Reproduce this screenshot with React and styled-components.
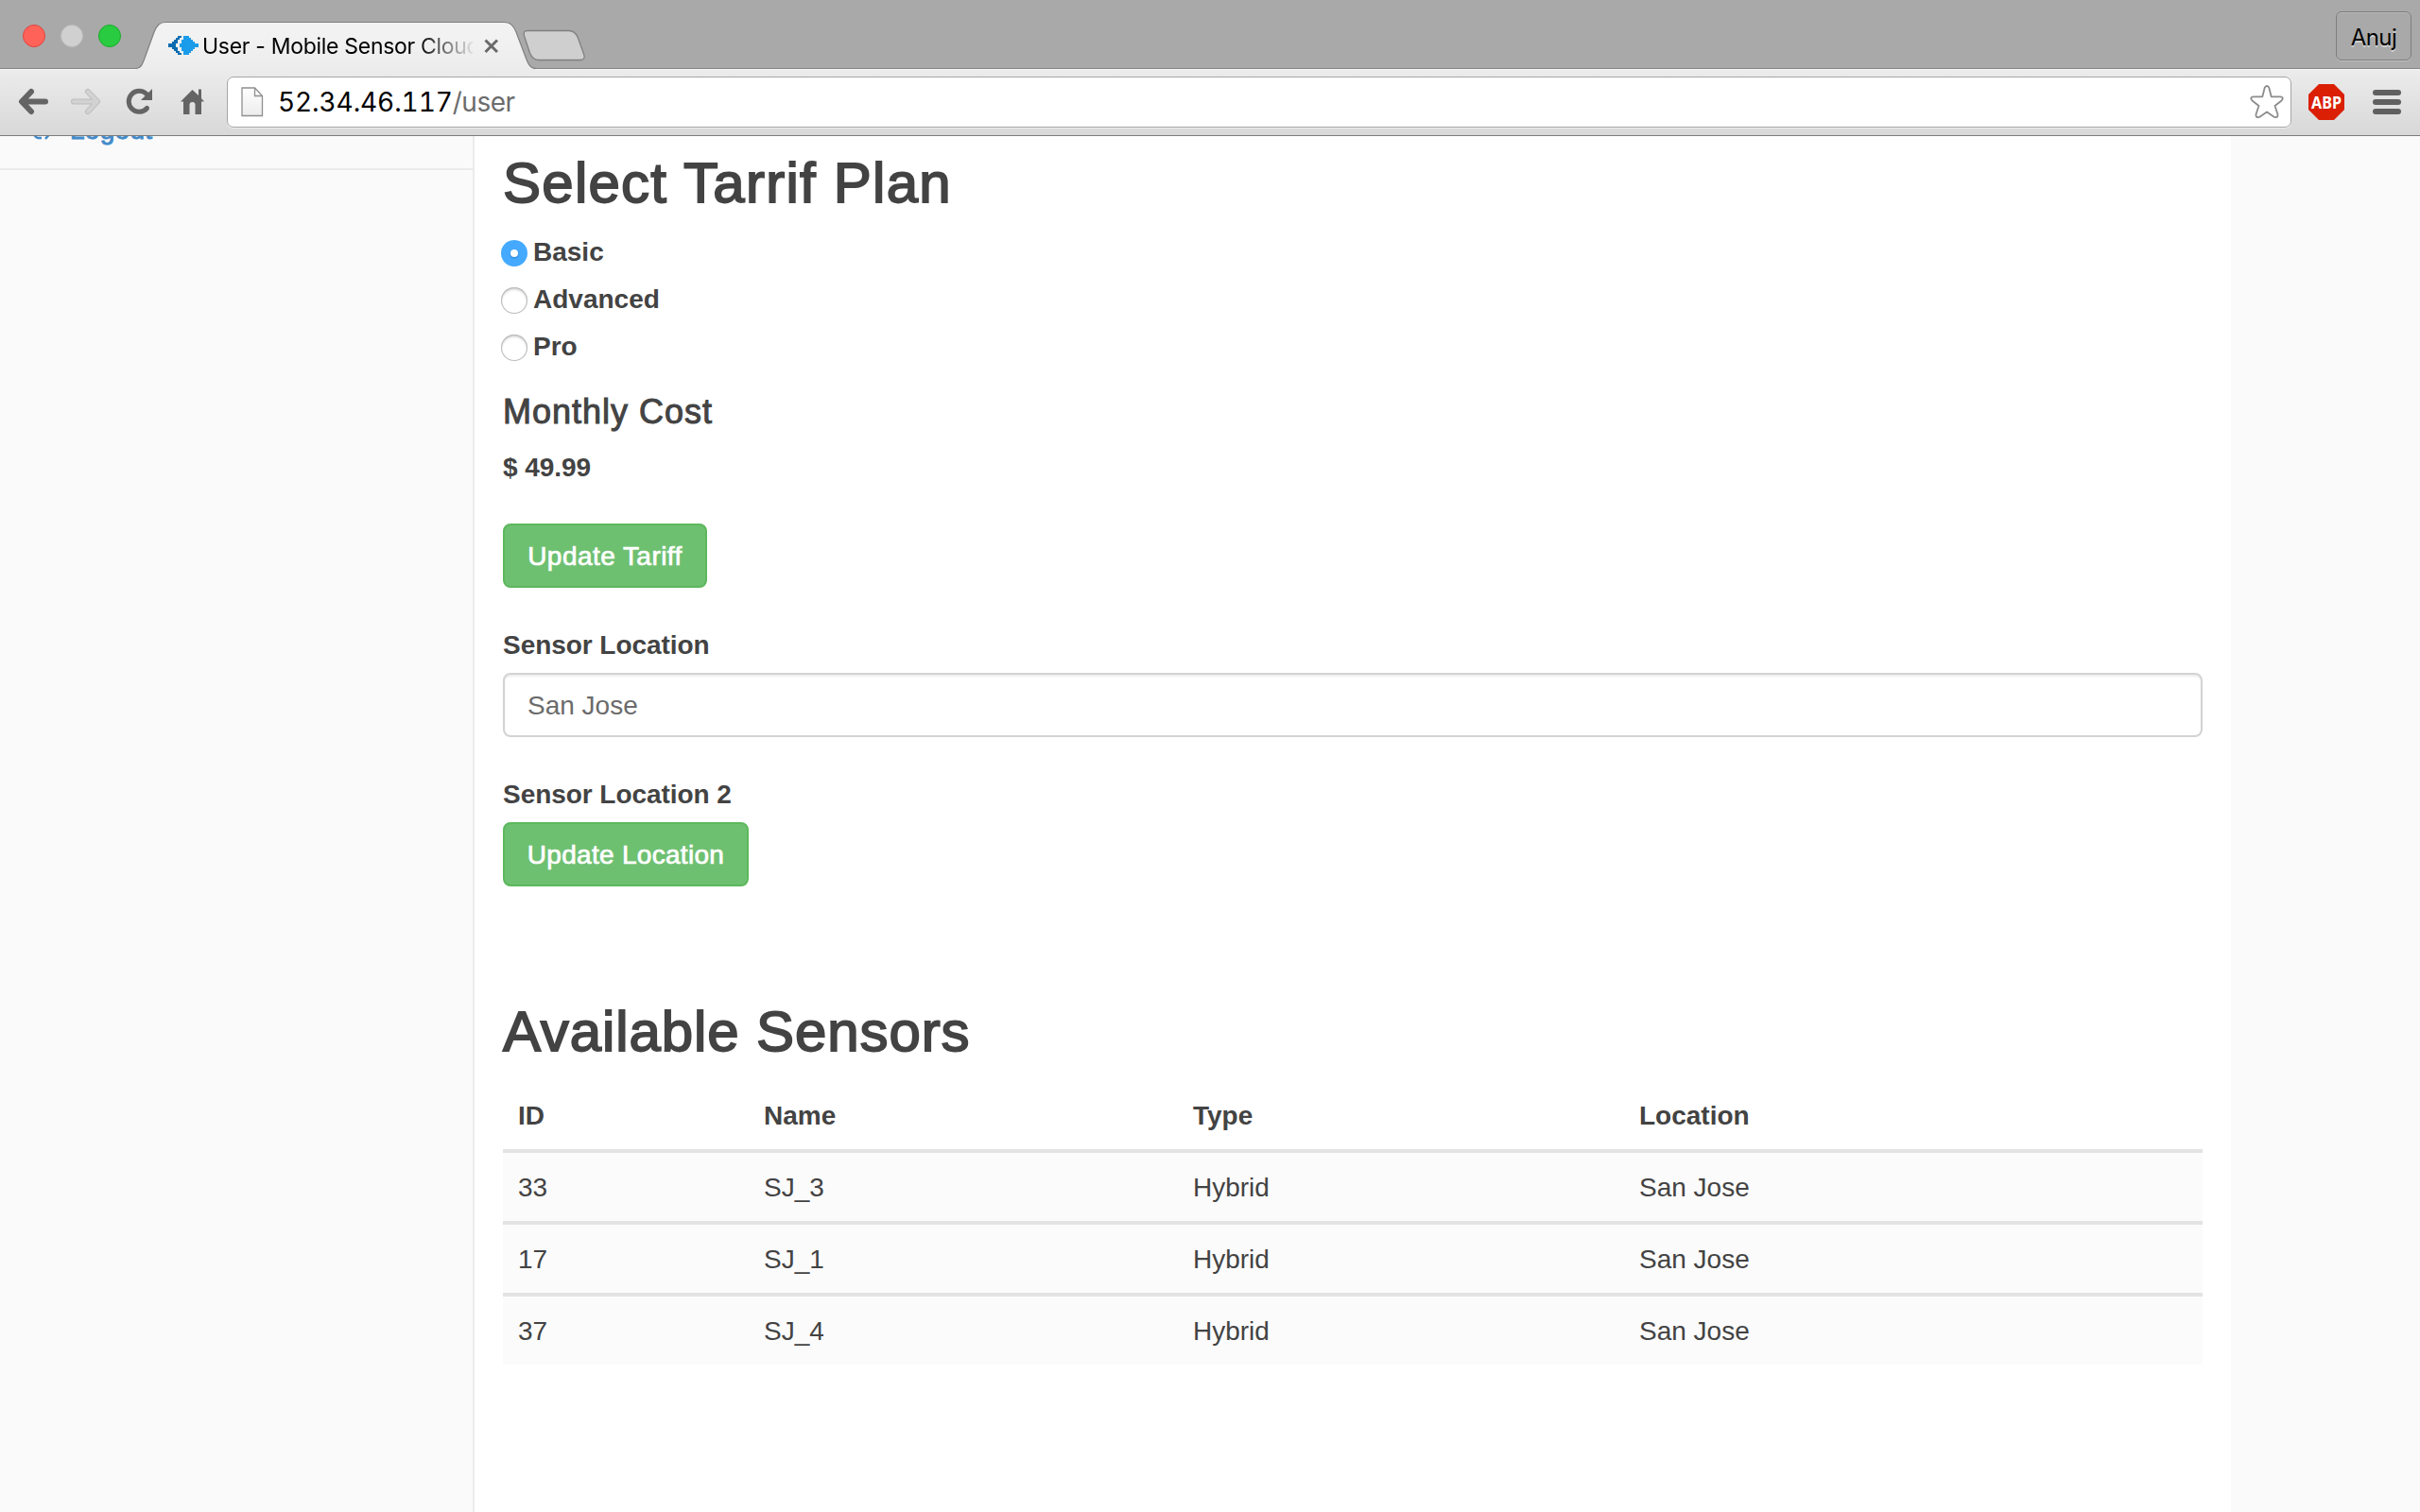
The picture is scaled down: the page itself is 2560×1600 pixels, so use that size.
import React from 'react';
import styled, { createGlobalStyle } from 'styled-components';

const GlobalStyle = createGlobalStyle`
  * { box-sizing: border-box; }
  html, body { margin: 0; padding: 0; overflow: hidden; }
  body { font-family: "Liberation Sans", Arial, sans-serif; color: #434343; }
`;

const Window = styled.div`
  width: 2560px;
  height: 1600px;
  display: flex;
  flex-direction: column;
  overflow: hidden;
  background: #fff;
`;

/* ---------- browser chrome ---------- */
const TabStrip = styled.header`
  height: 72px;
  flex: none;
  display: flex;
  align-items: flex-start;
  background: #a9a9a9;
`;

const Lights = styled.div`
  display: flex;
  align-items: center;
  gap: 16px;
  padding: 26px 0 0 24px;
  width: 144px;
`;

const Light = styled.span`
  width: 24px;
  height: 24px;
  border-radius: 50%;
  background: ${(p) => p.$fill};
  border: 1px solid ${(p) => p.$edge};
`;

const Tab = styled.div`
  position: relative;
  z-index: 1;
  width: 422px;
  height: 74px;
  padding: 24px 0 0 34px;
  display: flex;
  align-items: center;
`;

const TabShape = styled.svg`
  position: absolute;
  left: 0;
  top: 0;
`;

const Favicon = styled.svg`
  position: relative;
  flex: none;
  margin-top: -2px;
`;

const TabTitle = styled.span`
  position: relative;
  width: 286px;
  margin: 0 10px 0 4px;
  overflow: hidden;
  white-space: nowrap;
  font: 400 23px/30px Inter, sans-serif;
  letter-spacing: -0.3px;
  color: #000;
  mask-image: linear-gradient(90deg, #000 228px, transparent 290px);
`;

const CloseIcon = styled.svg`
  position: relative;
  flex: none;
`;

const NewTab = styled.svg`
  margin: 30px 0 0 -14px;
`;

const Profile = styled.div`
  margin: 12px 9px 0 auto;
  width: 80px;
  height: 52px;
  border: 1px solid #7e7e7e;
  border-radius: 6px;
  box-shadow: 0 1px 0 #c0c0c0, inset 0 1px 0 #b8b8b8;
  font: 400 24px/54px Inter, sans-serif;
  letter-spacing: -0.6px;
  text-align: center;
  color: #000;
  text-shadow: 0 2px 0 #cfcfcf;
`;

const Toolbar = styled.div`
  height: 72px;
  flex: none;
  display: flex;
  align-items: center;
  border-top: 1px solid #858585;
  border-bottom: 1px solid #7b7b7b;
  box-shadow: inset 0 1px 0 #f6f6f6;
  background: linear-gradient(#ececec, #d8d8d8);
`;

const NavIcons = styled.svg`
  flex: none;
`;

const Omnibox = styled.div`
  width: 2184px;
  height: 54px;
  flex: none;
  display: flex;
  align-items: center;
  padding: 0 7px 0 14px;
  background: #fff;
  border: 1px solid #a5a5a5;
  border-radius: 7px;
  box-shadow: 0 1px 0 #efefef;
`;

const Url = styled.span`
  flex: 1;
  margin-left: 15px;
  font: 400 28px/40px Inter, sans-serif;
  font-variant-numeric: tabular-nums;
  letter-spacing: -0.1px;
  color: #000;
`;

const UrlPath = styled.span`
  color: #6c6c6c;
  letter-spacing: -0.5px;
`;

const Extensions = styled.svg`
  flex: none;
  margin-left: 18px;
`;

/* ---------- page ---------- */
const Page = styled.div`
  flex: 1;
  min-height: 0;
  display: flex;
  background: #fafafa;
  overflow: hidden;
`;

const Sidebar = styled.aside`
  width: 502px;
  height: 100%;
  border-right: 2px solid #ebebeb;
`;

const NavItem = styled.div`
  height: 36px;
  display: flex;
  align-items: flex-end;
  border-bottom: 2px solid #ebebeb;
  overflow: hidden;
  padding: 0 0 20px 33px;
  font-size: 28px;
  line-height: 40px;
  color: #428bca;
  -webkit-text-stroke: 0.9px #428bca;
`;

const NavLabel = styled.span`
  margin-left: 17px;
  letter-spacing: 0.3px;
`;

const Main = styled.main`
  width: 1858px;
  height: 100%;
  padding: 16px 30px 0;
  background: #fff;
  display: flex;
  flex-direction: column;
  align-items: flex-start;
`;

const Heading = styled.h2`
  margin: ${(p) => p.$top || 0}px 0 0;
  height: 66px;
  font-size: 60px;
  line-height: 67px;
  font-weight: 400;
  white-space: nowrap;
  letter-spacing: ${(p) => p.$track}px;
  -webkit-text-stroke: 1.8px #434343;
`;

const RadioList = styled.div`
  margin-top: 20px;
  display: flex;
  flex-direction: column;
  gap: 10px;
`;

const RadioRow = styled.label`
  height: 40px;
  display: flex;
  align-items: flex-start;
  margin-left: -2px;
  font-size: 28px;
  line-height: 42px;
  font-weight: 700;
`;

const Radio = styled.span`
  width: 28px;
  height: 28px;
  margin: 8px 6px 0 0;
  border-radius: 50%;
  display: grid;
  place-items: center;
  background: ${(p) => (p.$on ? '#45aaff' : '#fff')};
  box-shadow: ${(p) => (p.$on ? 'none' : 'inset 0 0 0 1px #bcbcbc, inset 0 2px 3px #c4c4c4')};
  &::after {
    content: '';
    width: 8px;
    height: 8px;
    border-radius: 50%;
    background: #fff;
    box-shadow: ${(p) => (p.$on ? '0 1px 2px #2579c4' : 'none')};
  }
`;

const SubHeading = styled.h4`
  margin: 30px 0 0;
  height: 40px;
  font-size: 36px;
  line-height: 40px;
  font-weight: 400;
  letter-spacing: 1px;
  -webkit-text-stroke: 1px #434343;
`;

const Label = styled.div`
  height: 40px;
  margin-top: ${(p) => p.$top}px;
  font-size: 28px;
  line-height: 42px;
  font-weight: 700;
  letter-spacing: -0.05px;
`;

const Button = styled.button`
  width: ${(p) => p.$width}px;
  height: 68px;
  margin-top: ${(p) => p.$top}px;
  padding: 1px 0 0;
  border: 2px solid #5cb85c;
  border-radius: 8px;
  background: #6ec071;
  color: #fff;
  font: 400 28px/40px "Liberation Sans", Arial, sans-serif;
  letter-spacing: ${(p) => p.$track}px;
  -webkit-text-stroke: 0.7px #fff;
`;

const Field = styled.div`
  align-self: stretch;
  height: 68px;
  margin-top: 10px;
  padding: 13px 24px 11px;
  border: 2px solid #d3d3d3;
  border-radius: 8px;
  box-shadow: inset 0 2px 2px rgba(0, 0, 0, 0.07);
  font-size: 28px;
  line-height: 40px;
  color: #6b6b6b;
`;

const Table = styled.div`
  align-self: stretch;
  margin-top: 20px;
`;

const Row = styled.div`
  display: grid;
  grid-template-columns: 260px 454px 472px 1fr;
  font-size: 28px;
  line-height: 40px;
  padding: 17px 0 15px;
  ${(p) => (p.$head
    ? 'font-weight: 700;'
    : 'border-top: 4px solid #e3e3e3; background: #fbfbfb;')}
`;

const Cell = styled.span`
  padding: 0 16px;
`;

const plans = ['Basic', 'Advanced', 'Pro'];
const sensors = [
  ['33', 'SJ_3', 'Hybrid', 'San Jose'],
  ['17', 'SJ_1', 'Hybrid', 'San Jose'],
  ['37', 'SJ_4', 'Hybrid', 'San Jose'],
];

function BrowserTabs() {
  return (
    <TabStrip>
      <Lights>
        <Light $fill="#ff6259" $edge="#e0443e" />
        <Light $fill="#d0d0d0" $edge="#bcbcbc" />
        <Light $fill="#29cc41" $edge="#1aab29" />
      </Lights>
      <Tab>
        <TabShape width="424" height="74" viewBox="0 0 424 74">
          <defs>
            <linearGradient id="tab" x1="0" y1="0" x2="0" y2="1">
              <stop offset="0.3" stopColor="#f2f2f2" />
              <stop offset="1" stopColor="#ececec" />
            </linearGradient>
          </defs>
          <path
            d="M0 72.5C5 72.500 6.500 68 8.500 63L19 34C22 26.500 25 23.500 31 23.500H389C396 23.500 399 27 402 34L413 63C415 68 417 72.500 423 72.500V74H0Z"
            fill="url(#tab)"
          />
          <path
            d="M0 72.5C5 72.500 6.500 68 8.500 63L19 34C22 26.500 25 23.500 31 23.500H389C396 23.500 399 27 402 34L413 63C415 68 417 72.500 423 72.500"
            fill="none"
            stroke="#808080"
            strokeWidth="1.2"
          />
        </TabShape>
        <Favicon width="32" height="20" viewBox="0 0 16 10" shapeRendering="crispEdges">
          <path d="M5 0h2v1H6v1H5v2H4v2h1v2h1v1h1v1H5V9H4V8H3V7H2V6H0V4h2V3h1V2h1V1h1z" fill="#0b6cb0" />
          <path d="M8 0h3v1h1v1h1v1h1v1h2v2h-2v1h-1v1h-1v1h-1v1H8V8H7V6H6V4h1V2h1z" fill="#1b9cea" />
        </Favicon>
        <TabTitle>User - Mobile Sensor Cloud</TabTitle>
        <CloseIcon width="20" height="20" viewBox="0 0 20 20">
          <path d="M3.500 3.500l12.500 12.500M16 3.500L3.500 16" stroke="#6a6a6a" strokeWidth="3" />
        </CloseIcon>
      </Tab>
      <NewTab width="70" height="36" viewBox="0 0 70 36">
        <path
          d="M6 2.500H50C55 2.500 57 5 59 9L65.500 27C67 31 66 33.500 62 33.500H18C13 33.500 10.500 31 8.500 26L2.500 8C1.500 4 2.500 2.500 6 2.500Z"
          fill="#cfcfcf"
          stroke="#808080"
          strokeWidth="1.300"
        />
      </NewTab>
      <Profile>Anuj</Profile>
    </TabStrip>
  );
}

function BrowserToolbar() {
  return (
    <Toolbar>
      <NavIcons width="240" height="70" viewBox="0 73 240 70">
        <path d="M33 97L23 107.500L33 118M24 107.500H48" fill="none" stroke="#646464" strokeWidth="6" strokeLinecap="round" strokeLinejoin="round" />
        <path d="M93 97L103 107.500L93 118M102 107.500H78" fill="none" stroke="#bdbdbd" strokeWidth="6" strokeLinecap="round" strokeLinejoin="round" />
        <path d="M93 97L103 107.500L93 118M102 107.500H78" fill="none" stroke="#d2d2d2" strokeWidth="4" strokeLinecap="round" strokeLinejoin="round" />
        <path d="M155.500 114.500A11 11 0 1 1 155 99.500" fill="none" stroke="#646464" strokeWidth="5" strokeLinecap="round" />
        <path d="M161 94V106H149Z" fill="#646464" />
        <path d="M203.500 95L210 101V94.500H213V104L216 107.500H213V121H206.500V111Q206.500 108 203.500 108Q200.500 108 200.500 111V121H194V107.500H191Z" fill="#646464" />
      </NavIcons>
      <Omnibox>
        <svg width="24" height="32" viewBox="0 0 24 32">
          <defs>
            <linearGradient id="sheet" x1="0" y1="0" x2="0" y2="1">
              <stop offset="0" stopColor="#fff" />
              <stop offset="1" stopColor="#ececec" />
            </linearGradient>
          </defs>
          <path d="M1 1H14.500L22.500 9.500V30.500H1Z" fill="url(#sheet)" stroke="#8f8f8f" strokeWidth="1.300" />
          <path d="M14.500 1V9.500H22.500" fill="none" stroke="#8f8f8f" strokeWidth="1.300" />
        </svg>
        <Url>
          52.34.46.117<UrlPath>/user</UrlPath>
        </Url>
        <svg width="36" height="36" viewBox="0 0 36 36">
          <path
            d="M15.800 2.500Q18 -0.500 20.200 2.500L22.700 12.300H32.500Q36.500 13 33.500 16.500L26.500 22L29.500 31Q30 35 26 34L18 28.500L10 34Q6 35 6.500 31L9.500 22L2.500 16.500Q-0.500 13 3.500 12.300H13.300Z"
            fill="#fff"
            stroke="#8c8c8c"
            strokeWidth="1.800"
            strokeLinejoin="round"
          />
        </svg>
      </Omnibox>
      <Extensions width="110" height="44" viewBox="0 0 110 44">
        <path d="M11 3H27L38 14V30L27 41H11L0 30V14Z" fill="#da1f05" />
        <text x="3" y="28.500" fontFamily="Noto Sans, Open Sans, sans-serif" fontWeight="700" fontSize="18" fill="#fff" textLength="32" lengthAdjust="spacingAndGlyphs">ABP</text>
        <g fill="#606060">
          <rect x="68" y="9" width="30" height="6" rx="3" />
          <rect x="68" y="19" width="30" height="6" rx="3" />
          <rect x="68" y="29" width="30" height="6" rx="3" />
        </g>
      </Extensions>
    </Toolbar>
  );
}

export default function App() {
  return (
    <>
      <GlobalStyle />
      <Window>
        <BrowserTabs />
        <BrowserToolbar />
        <Page>
          <Sidebar>
            <NavItem>
              <svg width="24" height="40" viewBox="0 0 24 40">
                <path d="M5 14Q2 18 3 24Q4.500 27.500 7 28H11M15 29L21.500 21.500L15 14M9 21.500H19" fill="none" stroke="#428bca" strokeWidth="2.500" />
              </svg>
              <NavLabel>Logout</NavLabel>
            </NavItem>
          </Sidebar>
          <Main>
            <Heading $track={1.25}>Select Tarrif Plan</Heading>
            <RadioList>
              {plans.map((plan, i) => (
                <RadioRow key={plan}>
                  <Radio $on={i === 0} />
                  {plan}
                </RadioRow>
              ))}
            </RadioList>
            <SubHeading>Monthly Cost</SubHeading>
            <Label $top={18}>$ 49.99</Label>
            <Button $top={40} $width={216} $track={0.45}>Update Tariff</Button>
            <Label $top={40}>Sensor Location</Label>
            <Field>San Jose</Field>
            <Label $top={40}>Sensor Location 2</Label>
            <Button $top={10} $width={260} $track={0.3}>Update Location</Button>
            <Heading $top={120} $track={0.9}>Available Sensors</Heading>
            <Table>
              <Row $head>
                {['ID', 'Name', 'Type', 'Location'].map((name) => (
                  <Cell key={name}>{name}</Cell>
                ))}
              </Row>
              {sensors.map((sensor) => (
                <Row key={sensor[0]}>
                  {sensor.map((value, i) => (
                    <Cell key={i}>{value}</Cell>
                  ))}
                </Row>
              ))}
            </Table>
          </Main>
        </Page>
      </Window>
    </>
  );
}
